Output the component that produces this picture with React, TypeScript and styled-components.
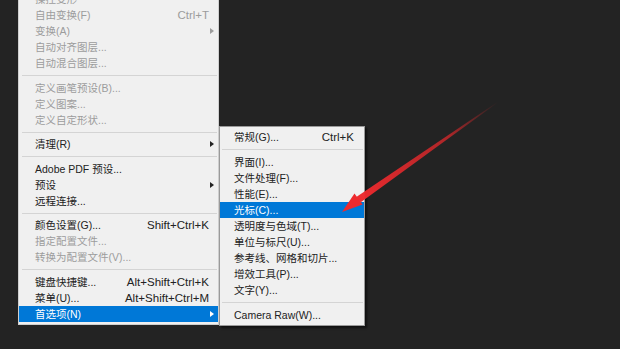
import styled, { createGlobalStyle } from 'styled-components'

const GlobalStyle = createGlobalStyle`
  html, body {
    margin: 0;
    padding: 0;
    background: #232323;
    overflow: hidden;
  }
`

const Page = styled.div`
  position: relative;
  width: 620px;
  height: 349px;
  overflow: hidden;
  background: #232323;
  padding-left: 18px;
  box-sizing: border-box;
  font-family: "Liberation Sans", "Noto Sans CJK SC", sans-serif;
`

const Menu = styled.div<{ $width: number }>`
  width: ${p => p.$width}px;
  box-sizing: border-box;
  background: #f0f0f0;
  border: 1px solid #cfcfcf;
  padding: 2px 0;
  display: flex;
  flex-direction: column;
`

const MainMenu = styled(Menu)`
  margin-top: -12px;
`

const SubMenu = styled(Menu)`
  position: absolute;
  left: 219px;
  top: 126px;
  border-color: #9a9a9a;
  box-shadow: 2px 2px 2px rgba(0, 0, 0, 0.55);
`

const Item = styled.div<{ $disabled?: boolean; $active?: boolean; $padLeft: number; $padRight: number }>`
  height: 16px;
  display: flex;
  align-items: center;
  padding: 0 ${p => p.$padRight}px 0 ${p => p.$padLeft}px;
  color: ${p => (p.$active ? '#ffffff' : p.$disabled ? '#9c9c9c' : '#222222')};
  background: ${p => (p.$active ? '#0078d7' : 'transparent')};
  white-space: nowrap;
`

const Label = styled.span`
  font-size: 10.5px;
  line-height: 16px;
`

const Shortcut = styled.span`
  margin-left: auto;
  font-size: 11.5px;
  line-height: 16px;
`

const Arrow = styled.span`
  margin-left: auto;
  margin-right: -5px;
  width: 0;
  height: 0;
  border-top: 3px solid transparent;
  border-bottom: 3px solid transparent;
  border-left: 4px solid currentColor;
`

const Separator = styled.div<{ $left: number; $below: number }>`
  height: 1px;
  margin: 4px 1px ${p => p.$below}px ${p => p.$left}px;
  background: #d4d4d4;
`

const Pointer = styled.svg`
  position: absolute;
  left: 0;
  top: 0;
  pointer-events: none;
`

type Entry =
  | { sep: true }
  | { label: string; shortcut?: string; sub?: boolean; disabled?: boolean; active?: boolean }

const mainEntries: Entry[] = [
  { label: '操控变形', disabled: true },
  { label: '自由变换(F)', shortcut: 'Ctrl+T', disabled: true },
  { label: '变换(A)', sub: true, disabled: true },
  { label: '自动对齐图层...', disabled: true },
  { label: '自动混合图层...', disabled: true },
  { sep: true },
  { label: '定义画笔预设(B)...', disabled: true },
  { label: '定义图案...', disabled: true },
  { label: '定义自定形状...', disabled: true },
  { sep: true },
  { label: '清理(R)', sub: true },
  { sep: true },
  { label: 'Adobe PDF 预设...' },
  { label: '预设', sub: true },
  { label: '远程连接...' },
  { sep: true },
  { label: '颜色设置(G)...', shortcut: 'Shift+Ctrl+K' },
  { label: '指定配置文件...', disabled: true },
  { label: '转换为配置文件(V)...', disabled: true },
  { sep: true },
  { label: '键盘快捷键...', shortcut: 'Alt+Shift+Ctrl+K' },
  { label: '菜单(U)...', shortcut: 'Alt+Shift+Ctrl+M' },
  { label: '首选项(N)', sub: true, active: true },
]

const subEntries: Entry[] = [
  { label: '常规(G)...', shortcut: 'Ctrl+K' },
  { sep: true },
  { label: '界面(I)...' },
  { label: '文件处理(F)...' },
  { label: '性能(E)...' },
  { label: '光标(C)...', active: true },
  { label: '透明度与色域(T)...' },
  { label: '单位与标尺(U)...' },
  { label: '参考线、网格和切片...' },
  { label: '增效工具(P)...' },
  { label: '文字(Y)...' },
  { sep: true },
  { label: 'Camera Raw(W)...' },
]

const renderEntries = (entries: Entry[], padLeft: number, padRight: number, sepLeft: number, sepBelow: number) =>
  entries.map((e, i) =>
    'sep' in e ? (
      <Separator key={i} $left={sepLeft} $below={sepBelow} />
    ) : (
      <Item key={i} $disabled={e.disabled} $active={e.active} $padLeft={padLeft} $padRight={padRight}>
        <Label>{e.label}</Label>
        {e.shortcut && <Shortcut>{e.shortcut}</Shortcut>}
        {e.sub && <Arrow />}
      </Item>
    )
  )

const App = () => {
  return (
    <>
      <GlobalStyle />
      <Page>
        <MainMenu $width={201}>{renderEntries(mainEntries, 16, 9, 3, 3.5)}</MainMenu>
        <SubMenu $width={146}>{renderEntries(subEntries, 14, 10, 2, 4)}</SubMenu>
        <Pointer width="620" height="349" viewBox="0 0 620 349">
          <defs>
            <linearGradient id="tail" x1="498" y1="102" x2="356" y2="201" gradientUnits="userSpaceOnUse">
              <stop offset="0" stopColor="#e8282b" stopOpacity="0" />
              <stop offset="0.35" stopColor="#e8282b" stopOpacity="0.7" />
              <stop offset="1" stopColor="#ee2a2e" stopOpacity="1" />
            </linearGradient>
          </defs>
          <polygon points="498.2,102.2 497.8,101.8 355.2,197.8 360.8,202.2" fill="url(#tail)" />
          <polygon points="342,212 354.5,193.5 362.5,204.5" fill="#ee2a2e" />
        </Pointer>
      </Page>
    </>
  )
}

export default App
